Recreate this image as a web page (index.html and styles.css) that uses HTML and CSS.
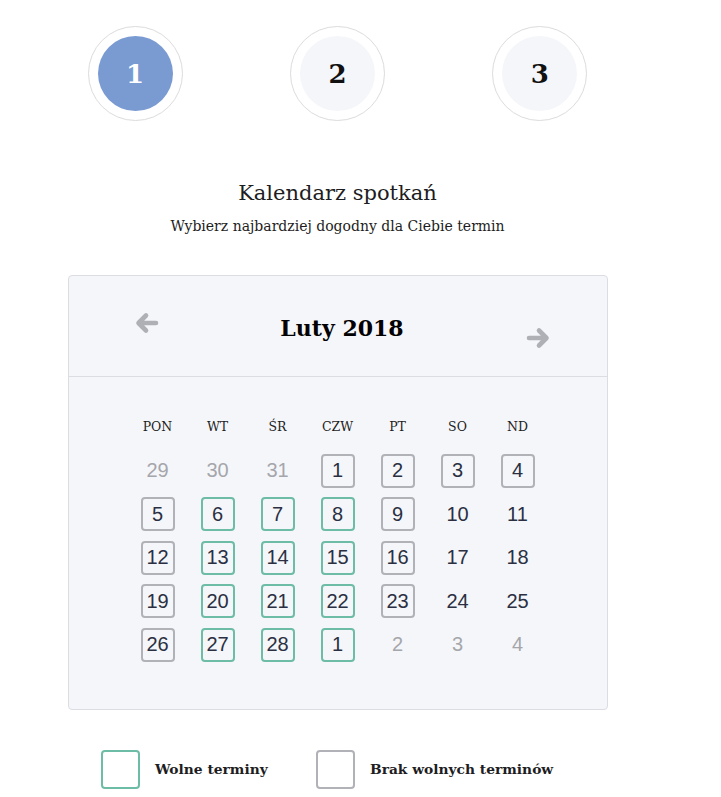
FILE: index.html
```html
<!DOCTYPE html>
<html lang="pl">
<head>
  <meta charset="UTF-8" />
  <meta name="viewport" content="width=device-width, initial-scale=1.0" />
  <title>Kalendarz spotkań</title>
  <link rel="stylesheet" href="styles.css">
</head>
<body>
  <div class="wrapper">
    <div class="steps">
      <div class="step"><div class="step-ring"><div class="step-dot active">1</div></div></div>
      <div class="step"><div class="step-ring"><div class="step-dot">2</div></div></div>
      <div class="step"><div class="step-ring"><div class="step-dot">3</div></div></div>
    </div>

    <h1 class="title">Kalendarz spotkań</h1>
    <p class="subtitle">Wybierz najbardziej dogodny dla Ciebie termin</p>

    <div class="calendar">
      <div class="cal-head">
        <span class="arrow prev">
          <svg width="24" height="24" viewBox="0 0 24 24"><path d="M21 12H4M11 4.5L3.5 12L11 19.5" fill="none" stroke="#aeb0b6" stroke-width="4.6" stroke-linecap="round" stroke-linejoin="round"/></svg>
        </span>
        <span class="month">Luty 2018</span>
        <span class="arrow next">
          <svg width="24" height="24" viewBox="0 0 24 24"><path d="M3 12H20M13 4.5L20.5 12L13 19.5" fill="none" stroke="#aeb0b6" stroke-width="4.6" stroke-linecap="round" stroke-linejoin="round"/></svg>
        </span>
      </div>
      <div class="cal-body">
        <div class="weekdays">
          <span>PON</span><span>WT</span><span>ŚR</span><span>CZW</span><span>PT</span><span>SO</span><span>ND</span>
        </div>
        <div class="days" id="days"></div>
      </div>
    </div>

    <div class="legend">
      <div class="legend-item"><span class="swatch free"></span>Wolne terminy</div>
      <div class="legend-item"><span class="swatch busy"></span>Brak wolnych terminów</div>
    </div>
  </div>

<script>
  // o = poza miesiącem, b = brak terminów, f = wolne, '' = zwykły dzień
  const days = [
    [29,'o'],[30,'o'],[31,'o'],[1,'b'],[2,'b'],[3,'b'],[4,'b'],
    [5,'b'],[6,'f'],[7,'f'],[8,'f'],[9,'b'],[10,''],[11,''],
    [12,'b'],[13,'f'],[14,'f'],[15,'f'],[16,'b'],[17,''],[18,''],
    [19,'b'],[20,'f'],[21,'f'],[22,'f'],[23,'b'],[24,''],[25,''],
    [26,'b'],[27,'f'],[28,'f'],[1,'f'],[2,'o'],[3,'o'],[4,'o']
  ];

  const box = document.getElementById('days');
  days.forEach(([n, type]) => {
    const cell = document.createElement('div');
    cell.className = 'day';
    const span = document.createElement('span');
    span.textContent = n;
    if (type === 'o') span.className = 'other';
    if (type === 'b') span.className = 'busy';
    if (type === 'f') span.className = 'free';
    cell.appendChild(span);
    box.appendChild(cell);
  });
</script>
</body>
</html>
```

FILE: styles.css
```css
body {
  margin: 0;
  font-family: "DejaVu Serif", "Liberation Serif", serif;
  background-color: white;
  color: #1d1d22;
}

.wrapper {
  width: 675px;
}

.steps {
  display: flex;
  padding: 26px 34px 0;
}

.step {
  width: 202.5px;
  display: flex;
  justify-content: center;
}

.step-ring {
  width: 93px;
  height: 93px;
  border: 1px solid #dcdcdc;
  border-radius: 50%;
  display: flex;
  align-items: center;
  justify-content: center;
}

.step-dot {
  width: 75px;
  height: 75px;
  border-radius: 50%;
  background-color: #f5f6fa;
  display: flex;
  align-items: center;
  justify-content: center;
  font-weight: bold;
  font-size: 26px;
  color: #111;
}

.step-dot.active {
  background-color: #7a9ad2;
  color: white;
}

.title {
  margin: 58px 0 0;
  text-align: center;
  font-weight: normal;
  font-size: 21px;
  line-height: 28px;
}

.subtitle {
  margin: 9px 0 0;
  text-align: center;
  font-size: 14px;
  line-height: 20px;
}

.calendar {
  margin: 39px 67.5px 0;
  background-color: #f5f6fa;
  border: 1px solid #dcdde3;
  border-radius: 4px;
}

.cal-head {
  height: 100px;
  border-bottom: 1px solid #dcdde3;
  display: flex;
  align-items: center;
  justify-content: space-between;
  padding: 0 57px 0 66px;
}

.arrow {
  display: flex;
}

.arrow.prev {
  margin-top: -6px;
}

.arrow.next {
  margin-top: 24px;
}

.month {
  font-weight: bold;
  font-size: 22px;
  color: #000;
  margin-top: 4px;
}

.cal-body {
  width: 420px;
  margin: 0 auto;
  padding: 41px 0 42px;
}

.weekdays {
  display: grid;
  grid-template-columns: repeat(7, 60px);
  text-align: center;
  font-size: 12.5px;
  line-height: 18px;
  color: #1d1d22;
  margin-bottom: 13px;
}

.days {
  display: grid;
  grid-template-columns: repeat(7, 60px);
  grid-auto-rows: 43.5px;
}

.day {
  display: flex;
  align-items: center;
  justify-content: center;
}

.day span {
  width: 34px;
  height: 34px;
  box-sizing: border-box;
  display: flex;
  align-items: center;
  justify-content: center;
  font-family: "Liberation Sans", Arial, sans-serif;
  font-size: 20px;
  color: #2a3042;
  border-radius: 4px;
}

.day span.other {
  color: #a5a6ab;
}

.day span.busy {
  border: 2px solid #b1b2b8;
}

.day span.free {
  border: 2px solid #6cbca6;
}

.legend {
  display: flex;
  padding: 40px 0 0 101px;
}

.legend-item {
  width: 215px;
  flex-shrink: 0;
  display: flex;
  align-items: center;
  font-weight: bold;
  font-size: 13.8px;
  white-space: nowrap;
}

.swatch {
  width: 39px;
  height: 39px;
  flex-shrink: 0;
  box-sizing: border-box;
  border-radius: 4px;
  margin-right: 15px;
}

.swatch.free {
  border: 2px solid #6cbca6;
}

.swatch.busy {
  border: 2px solid #b1b2b8;
}
```
